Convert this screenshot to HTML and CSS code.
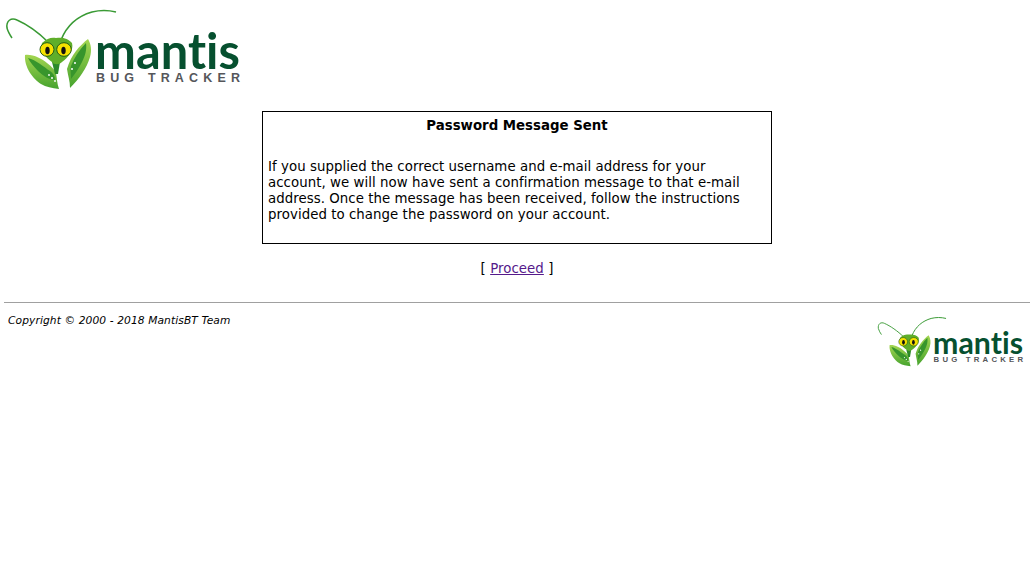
FILE: index.html
```html
<!DOCTYPE html>
<html lang="en">
<head>
<meta charset="utf-8">
<title>MantisBT</title>
<link rel="stylesheet" href="styles.css">
</head>
<body>
<svg class="defs" width="0" height="0" aria-hidden="true">
  <defs>
    <linearGradient id="leaf" x1="0" y1="0" x2="0" y2="1">
      <stop offset="0" stop-color="#a4d651"/>
      <stop offset="1" stop-color="#46a32e"/>
    </linearGradient>
    <symbol id="logo" viewBox="4 0 240 95">
      <path d="M48 42C38 32 26 24 17 20C11 17 6 21 7 28C8 32 10 35 12 38" fill="none" stroke="#3a9a35" stroke-width="1.5"/>
      <path d="M61 40C67 25 78 16 92 12C100 10 108 10 116 12" fill="none" stroke="#3a9a35" stroke-width="1.6"/>
      <path d="M25 55C33 54 42 59 47 63C52 67 55 70 56 73C57 78 57 84 59 89C52 88 46 87 41 84C33 79 24 67 25 55Z" fill="url(#leaf)"/>
      <path d="M28 58C36 60 44 67 50 71C53 73 55 76 55 80C50 80 43 76 38 71C34 67 30 62 28 58Z" fill="#37952c"/>
      <path d="M88 39C91 44 92 50 90 57C87 68 79 79 70 88C70 81 68 76 67 69C69 62 72 56 76 51C79 47 84 42 88 39Z" fill="url(#leaf)"/>
      <path d="M86 43C87 50 85 56 82 62C79 68 75 74 71 79C71 73 70 70 71 66C74 58 79 50 86 43Z" fill="#37952c"/>
      <circle cx="52" cy="78" r="1" fill="#fff"/><circle cx="49" cy="75" r=".9" fill="#fff"/><circle cx="55" cy="81" r=".9" fill="#fff"/>
      <circle cx="72" cy="69" r="1" fill="#fff"/><circle cx="75" cy="63" r="1" fill="#fff"/>
      <path d="M52 62L60 62L58 74L55 74Z" fill="#2c8a2a"/>
      <path d="M42 43C47 38 52 37 56 38C62 37 68 38 72 43C74 50 68 58 62 62C59 65 54 65 52 62C46 58 39 50 42 43Z" fill="#5fae2a"/>
      <ellipse cx="47" cy="49.500" rx="7" ry="6.800" fill="#f5e100" stroke="#245d14" stroke-width="1"/>
      <ellipse cx="64" cy="49.500" rx="7.300" ry="6.800" fill="#f5e100" stroke="#245d14" stroke-width="1"/>
      <ellipse cx="47.500" cy="50.500" rx="2.200" ry="3.800" fill="#111"/>
      <ellipse cx="63.500" cy="50.500" rx="2.200" ry="3.800" fill="#111"/>
      <text class="logo-word" x="95" y="68.500" textLength="145" lengthAdjust="spacingAndGlyphs">mantis</text>
      <text class="logo-sub" x="96" y="81.500" textLength="144">BUG TRACKER</text>
    </symbol>
  </defs>
</svg>
<header class="top">
  <svg class="logo-large" viewBox="0 0 240 95" role="img" aria-label="Mantis Bug Tracker"><use href="#logo"/></svg>
</header>
<main class="main">
  <section class="notice">
    <h1 class="notice-title">Password Message Sent</h1>
    <p class="notice-text">If you supplied the correct username and e-mail address for your account, we will now have sent a confirmation message to that e-mail address. Once the message has been received, follow the instructions provided to change the password on your account.</p>
  </section>
  <p class="proceed">[ <a href="#">Proceed</a> ]</p>
</main>
<hr class="rule">
<footer class="footer">
  <address class="copyright">Copyright © 2000 - 2018 MantisBT Team</address>
  <svg class="logo-small" viewBox="0 0 240 95" role="img" aria-label="Mantis Bug Tracker"><use href="#logo"/></svg>
</footer>
</body>
</html>
```
FILE: styles.css
```css
html, body { background: #fff; }
body {
  margin: 0;
  padding: 0 4px;
  font-family: "DejaVu Sans", Verdana, sans-serif;
  font-size: 13.33px;
  line-height: 16px;
  letter-spacing: .05px;
  color: #000;
}
.defs { position: absolute; }
.top { height: 103px; }
.logo-large { display: block; width: 240px; height: 95px; }
.main { display: flex; flex-direction: column; align-items: center; }
.notice {
  box-sizing: border-box;
  width: 510px;
  height: 133px;
  margin-top: 8px;
  padding: 6px 5px;
  border: 1px solid #000;
}
.notice-title { margin: 0 0 25px; font-size: inherit; line-height: 16px; font-weight: 700; letter-spacing: 0; text-align: center; }
.notice-text { margin: 0; }
.proceed { margin: 17px 0 0; line-height: 16px; text-align: center; }
.proceed a { color: #551a8b; text-decoration: underline; }
.rule { height: 1px; margin: 25px 0 0; border: 0; background: #a0a0a0; }
.footer { display: flex; justify-content: space-between; align-items: flex-start; padding: 8px 4px 0 4px; }
.copyright { margin-top: 3px; font-size: 10.67px; line-height: 14px; font-style: italic; letter-spacing: .1px; }
.logo-small { display: block; width: 150px; height: 59px; }
.logo-word { font-family: Lato, "Open Sans", sans-serif; font-size: 49px; font-weight: 700; fill: #06502f; }
.logo-sub { font-family: "Liberation Sans", sans-serif; font-size: 12.500px; font-weight: 700; fill: #55565a; }
```
